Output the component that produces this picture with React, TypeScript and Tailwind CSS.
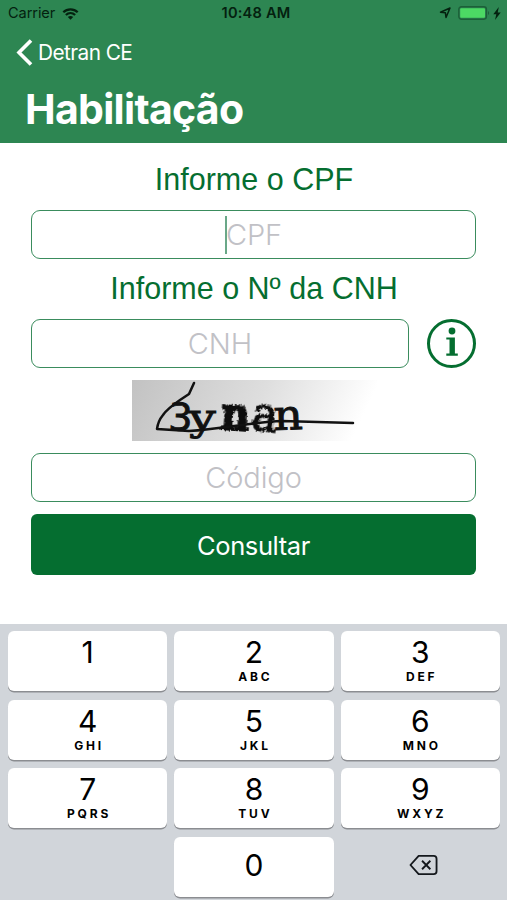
import { useState } from 'react';
import clsx from 'clsx';

const KEYS = [
  { digit: '1', letters: '' },
  { digit: '2', letters: 'ABC' },
  { digit: '3', letters: 'DEF' },
  { digit: '4', letters: 'GHI' },
  { digit: '5', letters: 'JKL' },
  { digit: '6', letters: 'MNO' },
  { digit: '7', letters: 'PQRS' },
  { digit: '8', letters: 'TUV' },
  { digit: '9', letters: 'WXYZ' },
];

type FieldName = 'cpf' | 'cnh' | 'codigo';

function StatusBar() {
  return (
    <div className="grid h-[28px] grid-cols-3 items-center pl-[8px] pr-[6px] text-[14.6px] text-[#04210f]">
      <div className="flex items-center gap-[7px]">
        <span className="tracking-[-0.1px]">Carrier</span>
        <svg width="17" height="12" viewBox="0 0 18 13" fill="none" stroke="currentColor" strokeWidth="2.5">
          <path d="M1.2 4.6C5.6.4 12.4.4 16.8 4.6" />
          <path d="M4 7.6c2.9-2.7 7.1-2.7 10 0" />
          <path d="M9 12.6 6.1 9.7c1.6-1.5 4.2-1.5 5.8 0Z" fill="currentColor" stroke="none" />
        </svg>
      </div>
      <div className="pl-[3px] text-center font-semibold tracking-[0.2px]">10:48 AM</div>
      <div className="flex items-center justify-end pb-[2px]">
        <svg width="12" height="12" viewBox="0 0 12 12" fill="none" stroke="currentColor" strokeWidth="1.5" strokeLinejoin="round">
          <path d="M11 1 7 10.5 6.4 5.8 1.5 5.2Z" />
        </svg>
        <svg className="ml-[7px]" width="32" height="14" viewBox="0 0 32 14">
          <rect x=".8" y=".8" width="27.6" height="12.4" rx="2.6" fill="none" stroke="#1c5f38" strokeWidth="1.4" />
          <rect x="2.2" y="2.2" width="24.8" height="9.6" rx="1" fill="#4cd964" />
          <path d="M30 5c1.4.6 1.4 3.4 0 4Z" fill="#1c5f38" />
        </svg>
        <svg className="ml-[3px]" width="8" height="13" viewBox="0 0 8 13" fill="currentColor">
          <path d="M5.8 0 .3 7.3h3L2 13l5.7-7.6H4.7Z" />
        </svg>
      </div>
    </div>
  );
}

function Header() {
  return (
    <header className="h-[142.5px] bg-[#2d8652]">
      <StatusBar />
      <button className="flex h-[49px] items-center pl-[16px] text-white">
        <svg width="17" height="27" viewBox="0 0 17 27" fill="none" stroke="currentColor" strokeWidth="3.6">
          <path d="M15 1.5 3 13.5l12 12" />
        </svg>
        <span className="ml-[5px] text-[20.8px] tracking-[-0.55px]">Detran CE</span>
      </button>
      <h1 className="pl-[25px] pt-px text-[41px] font-bold leading-[62px] tracking-[-0.7px] text-white">Habilitação</h1>
    </header>
  );
}

function Label({ children }: { children: string }) {
  return (
    <div className="pl-px text-center font-['Liberation_Sans',sans-serif] text-[30.5px] leading-[36px] text-[#056e30]">
      {children}
    </div>
  );
}

function Field({
  placeholder,
  active,
  className,
  onClick,
}: {
  placeholder: string;
  active?: boolean;
  className?: string;
  onClick: () => void;
}) {
  return (
    <div
      onClick={onClick}
      className={clsx(
        'flex h-[49px] items-center justify-center rounded-[9px] border-[1.5px] border-[#3a8c5d] text-[29px] font-light text-[#c1c1c6]',
        className
      )}
    >
      {active && <span className="h-[38px] w-[2px] bg-[#6aa888]" />}
      <span className={clsx('tracking-[-0.1px]', active && '-ml-px')}>{placeholder}</span>
    </div>
  );
}

function Captcha() {
  return (
    <svg className="mx-auto block overflow-visible" width="245" height="61" viewBox="0 0 245 61" fontFamily="DejaVu Serif, serif">
      <defs>
        <linearGradient id="fade" x1="0" y1="0" x2="1" y2="0.12">
          <stop offset="0" stopColor="#c2c2c2" />
          <stop offset="0.55" stopColor="#dedede" />
          <stop offset="1" stopColor="#ffffff" />
        </linearGradient>
        <filter id="rough" x="-20%" y="-20%" width="140%" height="140%">
          <feTurbulence type="fractalNoise" baseFrequency="0.5" numOctaves="2" seed="4" />
          <feDisplacementMap in="SourceGraphic" scale="4" xChannelSelector="R" yChannelSelector="G" />
          <feGaussianBlur stdDeviation="0.5" />
        </filter>
      </defs>
      <rect width="245" height="61" fill="url(#fade)" />
      <g fill="#111" stroke="#111">
        <text fontSize="38" strokeWidth="0.9" fontFamily="DejaVu Sans, sans-serif" transform="translate(36 50) rotate(2)">3</text>
        <text fontSize="38" strokeWidth="0.9" transform="translate(57 50) scale(1.25 1)">y</text>
        <text fontSize="43" fontWeight="bold" strokeWidth="2" filter="url(#rough)" transform="translate(88 49) rotate(4) scale(0.92 1.1)">n</text>
        <text fontSize="42" strokeWidth="1.4" filter="url(#rough)" transform="translate(118 49) rotate(8) scale(1.05 1.15)">a</text>
        <text fontSize="42" strokeWidth="0.9" transform="translate(142 50) rotate(-2) scale(1.08 1)">n</text>
      </g>
      <path
        d="M62 3 57 14 48 20Q35 29 31 35Q26 41 25 49L57 51C90 49 120 42 150 41L221 43"
        fill="none"
        stroke="#111"
        strokeWidth="2.5"
        strokeLinejoin="round"
        strokeLinecap="round"
      />
    </svg>
  );
}

function InfoButton() {
  return (
    <button className="flex size-[49px] items-center justify-center rounded-full border-[3px] border-[#056e30] pb-[4px] text-[#056e30]">
      <svg width="14" height="30" viewBox="0 0 14 30" fill="currentColor">
        <circle cx="7" cy="4" r="3.4" />
        <path d="M1.3 10.5H9.9V26.6H12.8V28.7H1.3V26.6H4.5V12.6H1.3Z" />
      </svg>
    </button>
  );
}

function Keypad() {
  const keyClass =
    'flex h-[60px] flex-col items-center rounded-[6px] bg-white text-black shadow-[0_1.5px_0_#8b8d91]';

  return (
    <div className="h-[276px] bg-[#d1d5da] pl-[8px] pr-[7px] pt-[7px]">
      <div className="grid grid-cols-3 gap-x-[7px] gap-y-[8.5px]">
        {KEYS.map((key) => (
          <button key={key.digit} className={keyClass}>
            <span className="mt-[3px] text-[30px] leading-[36px]">{key.digit}</span>
            <span className="mt-px -mr-[2.8px] text-[12px] font-bold leading-[12px] tracking-[2.8px]">{key.letters}</span>
          </button>
        ))}
        <div />
        <button className={clsx(keyClass, 'justify-center pb-[4px]')}>
          <span className="text-[30px] leading-[36px]">0</span>
        </button>
        <button className="flex items-center justify-center pb-[4px] pl-[7px] text-[#14181c]">
          <svg width="29" height="22" viewBox="0 0 30 22" fill="none" stroke="currentColor" strokeWidth="1.9" strokeLinejoin="round">
            <path d="M10 1.5H25.5Q28.5 1.5 28.5 4.5V17.5Q28.5 20.5 25.5 20.5H10L1.5 11Z" />
            <path d="m13.5 6.6 8.6 8.8M22.1 6.6l-8.6 8.8" />
          </svg>
        </button>
      </div>
    </div>
  );
}

export default function App() {
  const [active, setActive] = useState<FieldName>('cpf');

  return (
    <div className="flex h-[900px] w-[507px] flex-col overflow-hidden bg-white font-['Inter',sans-serif]">
      <Header />

      <main className="flex-1 px-[31px] pt-[18.5px]">
        <Label>Informe o CPF</Label>
        <Field
          placeholder="CPF"
          active={active === 'cpf'}
          onClick={() => setActive('cpf')}
          className="mt-[13px]"
        />

        <div className="mt-[11px]">
          <Label>Informe o Nº da CNH</Label>
        </div>
        <div className="mt-[13px] flex items-center gap-[18px]">
          <Field
            placeholder="CNH"
            active={active === 'cnh'}
            onClick={() => setActive('cnh')}
            className="flex-1"
          />
          <InfoButton />
        </div>

        <div className="mt-[12px] pl-px">
          <Captcha />
        </div>

        <Field
          placeholder="Código"
          active={active === 'codigo'}
          onClick={() => setActive('codigo')}
          className="mt-[12px]"
        />
        <button className="mt-[12px] h-[61px] w-full rounded-[6px] bg-[#056e30] pt-[3px] text-[25.5px] tracking-[-0.4px] text-white">
          Consultar
        </button>
      </main>

      <Keypad />
    </div>
  );
}
